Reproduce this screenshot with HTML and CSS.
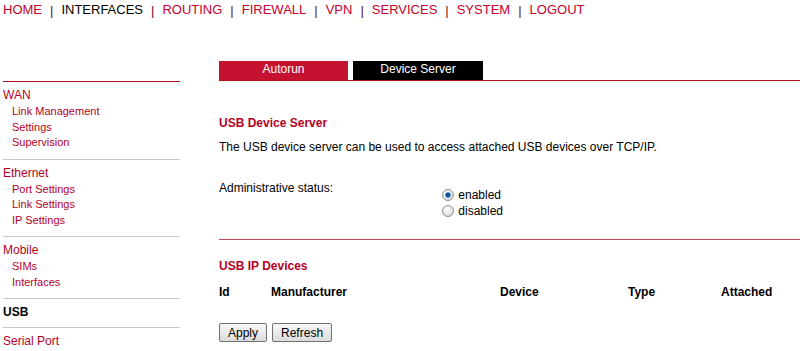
FILE: index.html
```html
<!DOCTYPE html>
<html lang="en">
<head>
  <meta charset="UTF-8">
  <title>USB Device Server</title>
  <link rel="stylesheet" href="styles.css">
</head>
<body>
  <div class="topnav">
    <a href="#" class="nav-link">HOME</a>
    <span class="sep">|</span>
    <span class="nav-current">INTERFACES</span>
    <span class="sep">|</span>
    <a href="#" class="nav-link">ROUTING</a>
    <span class="sep">|</span>
    <a href="#" class="nav-link">FIREWALL</a>
    <span class="sep">|</span>
    <a href="#" class="nav-link">VPN</a>
    <span class="sep">|</span>
    <a href="#" class="nav-link">SERVICES</a>
    <span class="sep">|</span>
    <a href="#" class="nav-link">SYSTEM</a>
    <span class="sep">|</span>
    <a href="#" class="nav-link">LOGOUT</a>
  </div>

  <div class="layout">
    <aside class="sidebar">
      <div class="side-section first">
        <a href="#" class="side-head">WAN</a>
        <ul class="side-sub">
          <li><a href="#">Link Management</a></li>
          <li><a href="#">Settings</a></li>
          <li><a href="#">Supervision</a></li>
        </ul>
      </div>
      <div class="side-section">
        <a href="#" class="side-head">Ethernet</a>
        <ul class="side-sub">
          <li><a href="#">Port Settings</a></li>
          <li><a href="#">Link Settings</a></li>
          <li><a href="#">IP Settings</a></li>
        </ul>
      </div>
      <div class="side-section">
        <a href="#" class="side-head">Mobile</a>
        <ul class="side-sub">
          <li><a href="#">SIMs</a></li>
          <li><a href="#">Interfaces</a></li>
        </ul>
      </div>
      <div class="side-section">
        <span class="side-head current">USB</span>
      </div>
      <div class="side-section">
        <a href="#" class="side-head">Serial Port</a>
      </div>
    </aside>

    <main class="content">
      <div class="tabs">
        <a href="#" class="tab tab-red">Autorun</a>
        <span class="tab tab-active">Device Server</span>
      </div>

      <h2 class="section-title">USB Device Server</h2>
      <p class="desc">The USB device server can be used to access attached USB devices over TCP/IP.</p>

      <div class="form-row">
        <div class="form-label">Administrative status:</div>
        <div class="radio-group">
          <label class="radio-row"><input type="radio" name="status" class="radio" checked> enabled</label>
          <label class="radio-row"><input type="radio" name="status" class="radio"> disabled</label>
        </div>
      </div>

      <hr class="divider">

      <h2 class="section-title devices-title">USB IP Devices</h2>
      <div class="dev-table">
        <span>Id</span>
        <span>Manufacturer</span>
        <span>Device</span>
        <span>Type</span>
        <span>Attached</span>
      </div>

      <div class="actions">
        <button class="btn">Apply</button>
        <button class="btn">Refresh</button>
      </div>
    </main>
  </div>
</body>
</html>
```

FILE: styles.css
```css
* {
  box-sizing: border-box;
}

body {
  margin: 0;
  font-family: "Liberation Sans", Arial, sans-serif;
  font-size: 12px;
  color: #000;
  background: #fff;
}

a {
  text-decoration: none;
}

/* top navigation */
.topnav {
  display: flex;
  align-items: flex-start;
  height: 61px;
  padding: 2px 3px;
  font-size: 13px;
  line-height: 15px;
  white-space: nowrap;
}

.nav-link {
  color: #c4002b;
}

.nav-current {
  color: #000;
}

.sep {
  color: #5a1030;
  margin: 1px 8px 0;
}

/* layout */
.layout {
  display: flex;
}

.sidebar {
  width: 177px;
  margin-left: 3px;
  padding-top: 20px;
  flex-shrink: 0;
}

.content {
  flex: 1;
  margin-left: 39px;
}

/* sidebar */
.side-section {
  border-top: 1px solid #c8c8d0;
  padding: 5px 0 7px;
}

.side-section.first {
  border-top-color: #a8101e;
}

.side-head {
  display: block;
  color: #b5001f;
  font-size: 12px;
  line-height: 16px;
}

.side-head.current {
  color: #000;
  font-weight: bold;
}

.side-sub {
  list-style: none;
  margin: 1px 0;
  padding: 0 0 0 9px;
}

.side-sub li {
  font-size: 11px;
  line-height: 15.5px;
}

.side-sub a {
  color: #b5001f;
}

/* tabs */
.tabs {
  display: flex;
  gap: 5px;
  border-bottom: 1px solid #b0101e;
}

.tab {
  height: 19px;
  line-height: 17px;
  text-align: center;
  color: #fff;
  font-size: 12px;
}

.tab-red {
  width: 129px;
  background: #c41230;
}

.tab-active {
  width: 130px;
  background: #000;
}

/* content */
.section-title {
  margin: 34px 0 8px;
  font-size: 12px;
  line-height: 16px;
  color: #b5001f;
}

.desc {
  margin: 0 0 25px;
  line-height: 16px;
}

.form-row {
  display: flex;
}

.form-label {
  width: 223px;
  line-height: 16px;
}

.radio-group {
  margin-top: 7px;
  display: flex;
  flex-direction: column;
}

.radio-row {
  line-height: 16px;
}

.radio {
  appearance: none;
  -webkit-appearance: none;
  width: 12px;
  height: 12px;
  margin: 0 1px 0 0;
  border: 1px solid #8f8f8f;
  border-radius: 50%;
  background: radial-gradient(circle at 40% 35%, #ffffff, #d2d2d2);
  vertical-align: -2px;
}

.radio:checked {
  background:
    radial-gradient(circle, #0f4d96 0 1.6px, #3c84cc 2.4px, rgba(60, 132, 204, 0) 3.2px),
    radial-gradient(circle at 40% 35%, #ffffff, #d2d2d2);
}

.divider {
  margin: 20px 0 0;
  border: none;
  border-top: 1px solid #c6465a;
}

.devices-title {
  margin: 18px 0 10px;
}

.dev-table {
  display: grid;
  grid-template-columns: 52px 229px 128px 93px auto;
  font-weight: bold;
  line-height: 16px;
}

.actions {
  display: flex;
  gap: 5px;
  margin-top: 23px;
}

.btn {
  height: 19px;
  padding: 0 8px;
  font-family: "Liberation Sans", Arial, sans-serif;
  font-size: 12px;
  color: #000;
  border: 1px solid #707070;
  border-radius: 2px;
  background: linear-gradient(#f7f7f7, #dcdcdc);
}
```
